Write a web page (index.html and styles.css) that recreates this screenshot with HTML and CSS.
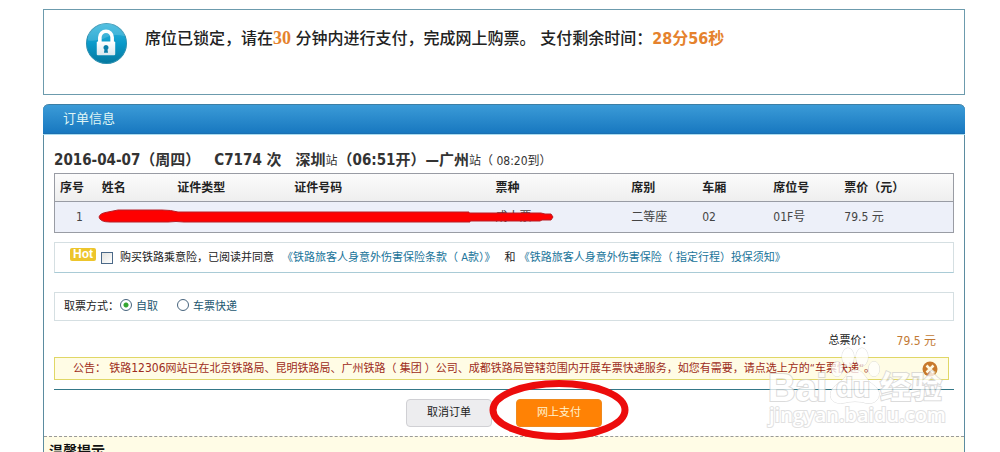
FILE: index.html
```html
<!DOCTYPE html>
<html lang="zh-CN">
<head>
<meta charset="utf-8">
<title>订单信息</title>
<link rel="stylesheet" href="styles.css">
</head>
<body>
<main class="page">
  <section class="lock-notice">
    <svg class="lock-icon" viewBox="0 0 40 40" aria-hidden="true">
      <defs>
        <linearGradient id="disc" x1="0" y1="0" x2="0" y2="1"><stop offset="0" stop-color="#35b6dc"/><stop offset=".5" stop-color="#0a9aca"/><stop offset="1" stop-color="#04789f"/></linearGradient>
        <linearGradient id="body" x1="0" y1="0" x2="0" y2="1"><stop offset="0" stop-color="#fff"/><stop offset="1" stop-color="#d9e8ef"/></linearGradient>
      </defs>
      <circle cx="20" cy="20" r="19.5" fill="url(#disc)" stroke="#2a8fb0"/>
      <path d="M2 17A18 18 0 0 1 38 13Q27 10 20 14T2 17Z" fill="#fff" opacity=".16"/>
      <path d="M13.500 19V14a6 6 0 0 1 12 0v5" fill="none" stroke="#fff" stroke-width="3.500"/>
      <rect x="10.500" y="18" width="18" height="13.500" rx="1" fill="url(#body)"/>
      <path d="M19.500 21.500a2.500 2.500 0 0 1 1.500 4.500l.5 3h-4l.5-3a2.500 2.500 0 0 1 1.500-4.500Z" fill="#087da9"/>
    </svg>
    <p class="lock-text">席位已锁定，请在<strong class="accent serif">30</strong> 分钟内进行支付，完成网上购票。 支付剩余时间：<strong class="accent">28分56秒</strong></p>
  </section>

  <section class="order">
    <h1 class="order-title">订单信息</h1>
    <div class="order-body">
      <h2 class="trip"><span>2016-04-07（周四）</span><span class="train">C7174 次</span><span class="route">深圳<small>站</small>（06:51开）—广州<small>站（ 08:20到）</small></span></h2>
      <div class="table-wrap">
        <table class="seats">
          <colgroup><col class="c-no"><col class="c-name"><col class="c-type"><col class="c-id"><col class="c-ticket"><col class="c-seat"><col class="c-seat"><col class="c-seat"><col></colgroup>
          <thead><tr><th>序号</th><th>姓名</th><th>证件类型</th><th>证件号码</th><th>票种</th><th>席别</th><th>车厢</th><th>席位号</th><th>票价（元）</th></tr></thead>
          <tbody><tr><td class="num">1</td><td></td><td></td><td></td><td>成人票</td><td>二等座</td><td>02</td><td>01F号</td><td>79.5 元</td></tr></tbody>
        </table>
        <svg class="strike" viewBox="0 0 456 16" aria-hidden="true"><path d="M1 9Q2 5 10 4L20 2H64Q73 2 80 4H371V5H443L447 6H453L455 9L453 12H444L442 13H372V14H86Q78 13 70 14H12Q2 14 1 9Z" fill="#fe0000" stroke="#b91c24" stroke-width="1"/></svg>
      </div>

      <div class="box insurance">
        <span class="hot">Hot</span>
        <input class="check" type="checkbox" id="insure">
        <label for="insure">购买铁路乘意险，已阅读并同意</label>
        <span class="links"><a href="#">《铁路旅客人身意外伤害保险条款（ A款）》</a> <span class="and">和</span> <a href="#">《铁路旅客人身意外伤害保险（ 指定行程）投保须知》</a></span>
      </div>

      <div class="box pickup">
        <span>取票方式：</span>
        <input class="radio" type="radio" name="pickup" id="self" checked><label for="self">自取</label>
        <input class="radio second" type="radio" name="pickup" id="express"><label for="express">车票快递</label>
      </div>

      <p class="total"><span>总票价：</span><span class="price">79.5 元</span></p>

      <div class="bulletin">
        <p>公告： 铁路<span class="figure">12306</span>网站已在北京铁路局、昆明铁路局、广州铁路（ 集团 ）公司、成都铁路局管辖范围内开展车票快递服务，如您有需要，请点选上方的“车票快递”。</p>
        <button class="close" type="button" aria-label="关闭"><svg viewBox="0 0 16 16"><circle cx="8" cy="8" r="7.500" fill="#c8792b"/><path d="M4.500 4.500l7 7M11.500 4.500l-7 7" stroke="#fff8df" stroke-width="2.500"/></svg></button>
      </div>

      <div class="actions">
        <button class="btn cancel" type="button">取消订单</button>
        <div class="pay-wrap">
          <button class="btn pay" type="button">网上支付</button>
          <svg class="ring" viewBox="0 0 140 60" aria-hidden="true"><ellipse cx="70" cy="30" rx="66" ry="26.500" fill="none" stroke="#ec0c0c" stroke-width="7"/></svg>
        </div>
      </div>
    </div>
    <div class="tips"><h2>温馨提示</h2></div>
  </section>

  <div class="watermark" aria-hidden="true">
    <svg class="paw" viewBox="0 0 52 60"><g fill="#fff" stroke="#cfcfcf"><ellipse cx="20" cy="12" rx="6" ry="9"/><ellipse cx="34" cy="12" rx="6" ry="9"/><ellipse cx="9" cy="24" rx="5.500" ry="7.500"/><ellipse cx="46" cy="24" rx="5.500" ry="7.500"/><path d="M27 25C20 25 18 33 12 37C5 42 1 46 3 53C5 59 14 59 20 57Q27 56 34 57C42 60 50 58 51 50C52 43 44 40 40 35C36 30 34 25 27 25Z"/></g></svg>
    <div class="brand"><span class="bai">Bai</span><span class="du">du</span><span class="jy">经验</span></div>
    <div class="site">jingyan.baidu.com</div>
  </div>
</main>
</body>
</html>
```
FILE: styles.css
```css
* { box-sizing: border-box; }
body {
  margin: 0;
  height: 100vh;
  overflow: hidden;
  background: #fff;
  color: #333;
  font: 11px/16px "DejaVu Sans Condensed", "Noto Sans CJK SC", sans-serif;
}
h1, h2, p { margin: 0; }
a { color: #20749a; text-decoration: none; }
button { font: inherit; }
.page { position: relative; padding: 9px 35px 0 43px; }

.lock-notice {
  display: flex;
  align-items: flex-start;
  gap: 18px;
  min-height: 86px;
  padding: 13px 42px;
  border: 1px solid #6c9bad;
}
.lock-icon { flex: none; width: 41px; height: 41px; }
.lock-text { padding-top: 3px; font-size: 16px; line-height: 24px; font-weight: 500; color: #222; white-space: nowrap; }
.accent { color: #e5822d; }
.serif { font-family: "Liberation Serif", serif; font-size: 18px; }

.order { margin-top: 9px; border: 1px solid #5b8ca0; border-top: 0; border-radius: 6px 6px 0 0; }
.order-title {
  margin: 0 -1px;
  padding: 0 20px;
  border-top: 1px solid #3b7ea4;
  border-bottom: 1px solid #1c6fb0;
  border-radius: 6px 6px 0 0;
  background: linear-gradient(#3b9bd7, #1878c0);
  box-shadow: 0 1px 0 #a9dcf0;
  color: #dff5f5;
  font-size: 13px;
  line-height: 28px;
  font-weight: 400;
}
.order-body { padding: 14px 10px 9px; }
.trip { display: flex; gap: 14px; font-size: 15px; line-height: 24px; font-weight: 700; white-space: nowrap; }
.trip small { font-size: 12px; font-weight: 400; }

.table-wrap { position: relative; }
.seats { width: 100%; border: 1px solid #999ca4; border-collapse: collapse; table-layout: fixed; text-align: left; }
.seats th, .seats td { padding: 0 0 0 5px; white-space: nowrap; }
.seats th { height: 28px; font-size: 12px; color: #222; }
.seats td { height: 31px; font-size: 12px; color: #444; }
.seats .num { padding-left: 21px; }
.seats thead { background: linear-gradient(#fcfcfc, #eee); border-bottom: 1px solid #999ca4; }
.seats tbody { background: #edf0f9; }
.c-no { width: 4.7%; }
.c-name { width: 8.4%; }
.c-type { width: 13%; }
.c-id { width: 22.4%; }
.c-ticket { width: 15.1%; }
.c-seat { width: 7.9%; }
.strike { position: absolute; left: 44px; top: 35px; width: 456px; height: 16px; }

.box { display: flex; align-items: center; border: 1px solid #d5dfe2; white-space: nowrap; }
.insurance { height: 31px; margin-top: 9px; padding-left: 15px; border-bottom-color: #a9cbd6; }
.hot { margin: -6px 5px 0 0; padding: 0 3px; border-radius: 2px; background: #edc52c; color: #fff; font: 700 12px/13px "Liberation Sans", sans-serif; }
.check { appearance: none; width: 12px; height: 12px; margin: 0 7px 0 0; border: 1px solid #4b6988; background: linear-gradient(135deg, #e4e4e0, #fff); }
.insurance label { color: #222; }
.links { margin-left: 8px; }
.and { margin-left: 6px; color: #222; }
.pickup { height: 29px; margin-top: 19px; padding-left: 9px; color: #222; }
.radio { appearance: none; width: 12px; height: 12px; margin: 0 4px 3px 1px; border: 1px solid #47647d; border-radius: 50%; background: #fff; }
.radio:checked { background: radial-gradient(circle, #34a52f 0 2px, #fff 3px); }
.second { margin-left: 19px; }
.pickup label { color: #1d5770; }

.total { display: flex; justify-content: flex-end; gap: 24px; margin-top: 12px; padding-right: 18px; color: #222; }
.price { color: #c27a35; font-size: 12px; }
.bulletin { display: flex; align-items: center; justify-content: space-between; height: 23px; margin: 8px 5px 0 0; padding: 0 10px 0 18px; border: 1px solid #e0d766; background: #fffce5; color: #9d2b20; white-space: nowrap; }
.figure { font-size: 12px; }
.close { display: block; width: 16px; height: 16px; padding: 0; border: 0; background: none; }
.close svg { display: block; }
.actions { display: flex; justify-content: center; gap: 24px; margin-top: 9px; padding-top: 9px; border-top: 1px solid #347887; }
.pay-wrap { position: relative; }
.btn { display: block; width: 86px; height: 28px; padding: 0; border: 1px solid #d0d0d4; border-radius: 4px; background: #ededef; color: #222; }
.pay { border-color: #ef8a1d; background: #ff8205; color: #fff3cf; }
.ring { position: absolute; left: -27px; top: -19px; width: 140px; height: 60px; }
.tips { border-top: 1px dashed #999; background: #fffce6; padding: 4px 5px; }
.tips h2 { font-size: 14px; line-height: 20px; color: #111; }

.watermark { position: absolute; right: 52px; top: 345px; width: 180px; height: 88px; opacity: .75; white-space: nowrap; color: #fff; paint-order: stroke; }
.paw { position: absolute; left: 60px; top: 0; width: 52px; height: 60px; }
.brand { position: absolute; left: 0; top: 21px; display: flex; align-items: center; height: 44px; font: 700 38px/44px "Liberation Sans", "Noto Sans CJK SC", sans-serif; -webkit-text-stroke: 2px #cfcfcf; }
.bai { width: 68px; }
.du { width: 44px; font-size: 28px; }
.jy { font-size: 31px; }
.site { position: absolute; left: 1px; top: 57px; font: 600 20px/26px "Open Sans", sans-serif; -webkit-text-stroke: 2px #d8d8d8; }
```
